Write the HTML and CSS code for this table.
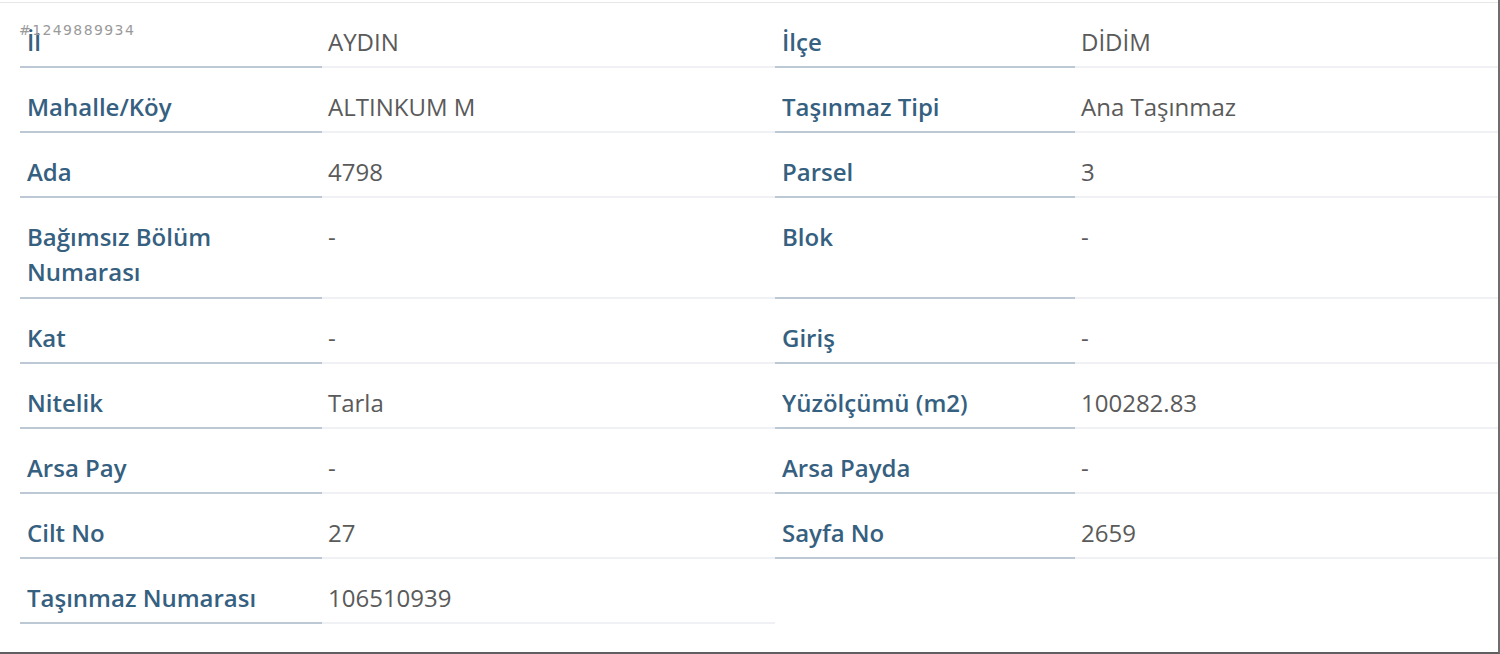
FILE: index.html
```html
<!DOCTYPE html>
<html lang="tr">
<head>
<meta charset="utf-8">
<link rel="stylesheet" href="styles.css">
</head>
<body>
<div class="frame">
  <div class="sheet">
    <span class="watermark">#1249889934</span>
    <div class="grid">
      <div class="lbl">İl</div><div class="val">AYDIN</div><div class="lbl">İlçe</div><div class="val">DİDİM</div>
      <div class="lbl">Mahalle/Köy</div><div class="val">ALTINKUM M</div><div class="lbl">Taşınmaz Tipi</div><div class="val">Ana Taşınmaz</div>
      <div class="lbl">Ada</div><div class="val">4798</div><div class="lbl">Parsel</div><div class="val">3</div>
      <div class="lbl tall">Bağımsız Bölüm<br>Numarası</div><div class="val tall">-</div><div class="lbl tall">Blok</div><div class="val tall">-</div>
      <div class="lbl">Kat</div><div class="val">-</div><div class="lbl">Giriş</div><div class="val">-</div>
      <div class="lbl">Nitelik</div><div class="val">Tarla</div><div class="lbl">Yüzölçümü (m2)</div><div class="val">100282.83</div>
      <div class="lbl">Arsa Pay</div><div class="val">-</div><div class="lbl">Arsa Payda</div><div class="val">-</div>
      <div class="lbl">Cilt No</div><div class="val">27</div><div class="lbl">Sayfa No</div><div class="val">2659</div>
      <div class="lbl">Taşınmaz Numarası</div><div class="val">106510939</div>
    </div>
  </div>
</div>
</body>
</html>
```
FILE: styles.css
```css
* { box-sizing: border-box; }
html, body { margin: 0; padding: 0; background: #ffffff; }
.frame {
  width: 1500px;
  height: 654px;
  border-right: 2px solid #6e6e6e;
  border-bottom: 2px solid #5f5f5f;
  padding-top: 2px;
  overflow: hidden;
}
.sheet {
  position: relative;
  border-top: 1px solid #e4e6e8;
  padding-left: 20px;
}
.watermark {
  position: absolute;
  left: 19px;
  top: 19px;
  font-family: "DejaVu Sans", "Liberation Sans", sans-serif;
  font-size: 14px;
  letter-spacing: 1.4px;
  color: #9a9a9a;
}
.grid {
  display: grid;
  grid-template-columns: 302px 453px 300px 423px;
}
.lbl, .val {
  font-family: "Open Sans", "Liberation Sans", sans-serif;
  font-size: 24px;
  line-height: 35px;
  height: 65px;
  padding: 21px 0 0 7px;
}
.lbl.tall, .val.tall { height: 101px; }
.lbl {
  color: #36607f;
  font-weight: 600;
  border-bottom: 2px solid #bcc8d4;
}
.val {
  color: #5a5a5a;
  font-weight: 400;
  border-bottom: 2px solid #eff1f4;
  padding-left: 6px;
}
```
